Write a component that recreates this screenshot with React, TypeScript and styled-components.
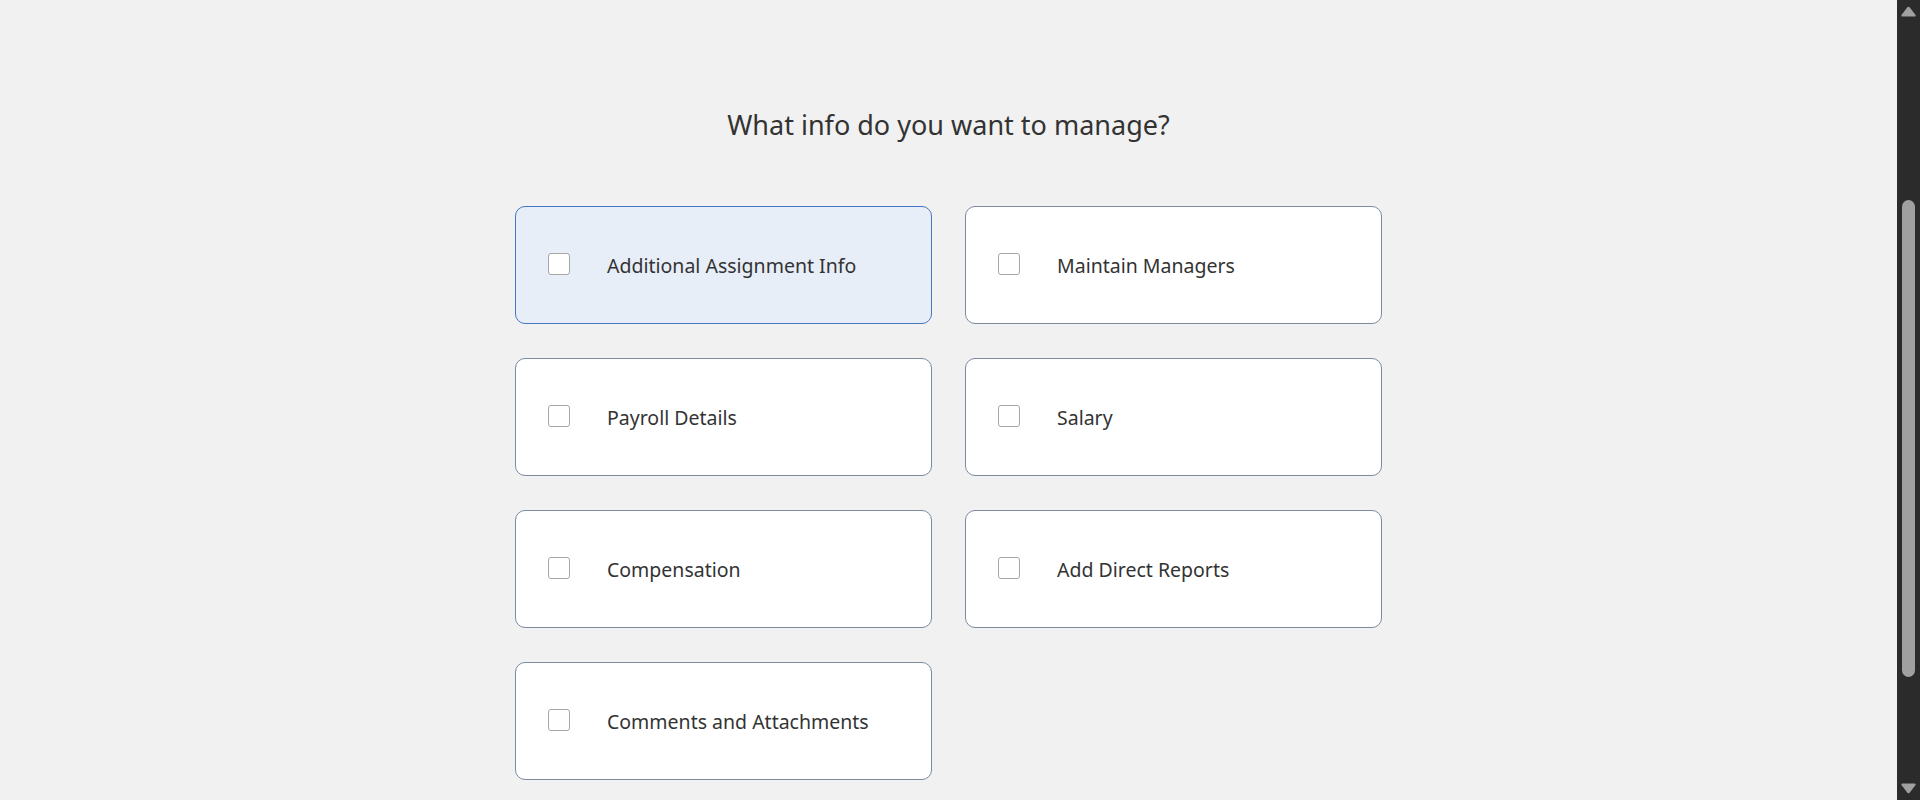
import React from "react";
import styled, { createGlobalStyle } from "styled-components";

const GlobalStyle = createGlobalStyle`
  html, body { margin: 0; padding: 0; background: #f1f1f1; overflow: hidden; }
  body { font-family: "Noto Sans", "Open Sans", Arial, sans-serif; color: #333333; }
`;

const Shell = styled.div`
  display: flex;
  height: 100vh;
`;

const Main = styled.main`
  flex: 1;
  min-width: 0;
  display: flex;
  flex-direction: column;
  align-items: center;
  padding-top: 107px;
`;

const Heading = styled.h1`
  margin: 0 0 63px;
  font-size: 27px;
  line-height: 36px;
  font-weight: 400;
  color: #333333;
`;

const Grid = styled.div`
  display: grid;
  grid-template-columns: repeat(2, 417px);
  grid-auto-rows: 118px;
  column-gap: 33px;
  row-gap: 34px;
`;

const Card = styled.label<{ $selected?: boolean }>`
  display: flex;
  align-items: center;
  gap: 37px;
  padding-left: 32px;
  box-sizing: border-box;
  border-radius: 10px;
  border: 1px solid ${(p) => (p.$selected ? "#4676c4" : "#7a8ba0")};
  background: ${(p) => (p.$selected ? "#e8eef8" : "#ffffff")};
  cursor: pointer;
`;

const Box = styled.span`
  width: 20px;
  height: 20px;
  flex: none;
  border: 1.5px solid #a6a6a6;
  border-radius: 3px;
  background: #ffffff;
  margin-top: -2px;
`;

const Label = styled.span`
  font-size: 19.5px;
  color: #333333;
`;

const Scrollbar = styled.aside`
  width: 23px;
  flex: none;
  background: #2b2b2b;
  display: flex;
  flex-direction: column;
  align-items: center;
`;

const ArrowButton = styled.div`
  height: 23px;
  width: 23px;
  flex: none;
  display: flex;
  align-items: center;
  justify-content: center;
`;

const Track = styled.div`
  flex: 1;
  width: 100%;
  display: flex;
  flex-direction: column;
  align-items: center;
`;

const Thumb = styled.div<{ $offset: number; $length: number }>`
  margin-top: ${(p) => p.$offset}px;
  height: ${(p) => p.$length}px;
  width: 13px;
  border-radius: 7px;
  background: #a0a0a0;
`;

const items = [
  { label: "Additional Assignment Info", selected: true },
  { label: "Maintain Managers" },
  { label: "Payroll Details" },
  { label: "Salary" },
  { label: "Compensation" },
  { label: "Add Direct Reports" },
  { label: "Comments and Attachments" },
];

const Arrow = ({ down }: { down?: boolean }) => (
  <svg width="15" height="11" viewBox="0 0 15 11" style={down ? { transform: "rotate(180deg)" } : undefined}>
    <path d="M6.4 1.3 Q7.5 0 8.6 1.3 L14.6 9 Q15 10.5 13.6 10.5 L1.4 10.5 Q0 10.5 0.4 9 Z" fill="#a0a0a0" />
  </svg>
);

export default function App() {
  return (
    <>
      <GlobalStyle />
      <Shell>
        <Main>
          <Heading>What info do you want to manage?</Heading>
          <Grid>
            {items.map((it) => (
              <Card key={it.label} $selected={it.selected}>
                <Box />
                <Label>{it.label}</Label>
              </Card>
            ))}
          </Grid>
        </Main>
        <Scrollbar>
          <ArrowButton>
            <Arrow />
          </ArrowButton>
          <Track>
            <Thumb $offset={177} $length={477} />
          </Track>
          <ArrowButton>
            <Arrow down />
          </ArrowButton>
        </Scrollbar>
      </Shell>
    </>
  );
}
